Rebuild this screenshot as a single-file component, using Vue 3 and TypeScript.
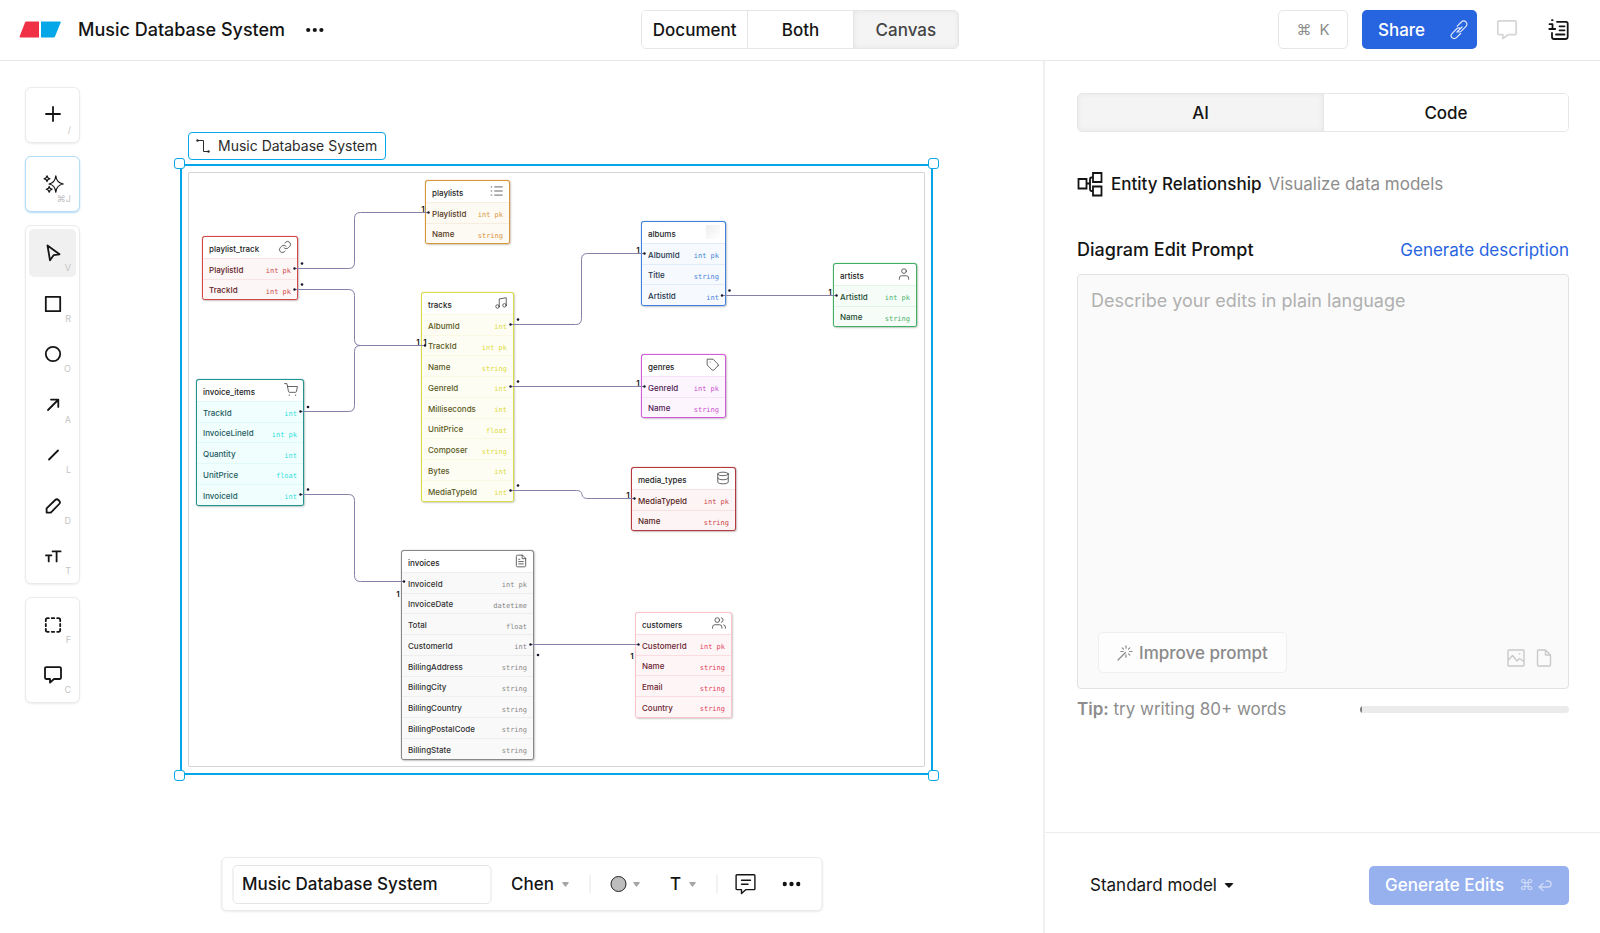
<script setup lang="ts">
import { ref } from 'vue'

interface Field { name: string; type: string }
interface Entity {
  name: string
  x: number
  y: number
  width: number
  tone: string
  icon: string
  fields: Field[]
}
interface Tool { label: string; key: string; icon: string; thin?: boolean }

const ROW = 20.75

const parse = (source: string): Field[] =>
  source.split(',').map((part) => {
    const [name, ...type] = part.trim().split(' ')
    return { name, type: type.join(' ') }
  })

const entities: Entity[] = [
  {
    name: 'playlists', x: 237, y: 8, width: 85, tone: 'amber',
    icon: 'M8 5h13M8 12h13M8 19h13M2 5h1M2 12h1M2 19h1',
    fields: parse('PlaylistId int pk, Name string'),
  },
  {
    name: 'playlist_track', x: 14, y: 64, width: 96, tone: 'red',
    icon: 'M10 13a5 5 0 0 0 7.5.5l3-3a5 5 0 0 0-7-7l-1.8 1.7M14 11a5 5 0 0 0-7.5-.5l-3 3a5 5 0 0 0 7 7l1.8-1.7',
    fields: parse('PlaylistId int pk, TrackId int pk'),
  },
  {
    name: 'invoice_items', x: 8, y: 207, width: 108, tone: 'teal',
    icon: 'M1 1h4l2.7 13.4a2 2 0 0 0 2 1.6h9.7a2 2 0 0 0 2-1.6L23 6H6M9 20.5v1M20 20.5v1',
    fields: parse('TrackId int, InvoiceLineId int pk, Quantity int, UnitPrice float, InvoiceId int'),
  },
  {
    name: 'tracks', x: 233, y: 120, width: 93, tone: 'yellow',
    icon: 'M9 18V5l12-2v13M9 18a3 3 0 1 1-6 0 3 3 0 0 1 6 0zM21 16a3 3 0 1 1-6 0 3 3 0 0 1 6 0z',
    fields: parse('AlbumId int, TrackId int pk, Name string, GenreId int, Milliseconds int, UnitPrice float, Composer string, Bytes int, MediaTypeId int'),
  },
  {
    name: 'albums', x: 453, y: 49, width: 85, tone: 'blue', icon: '',
    fields: parse('AlbumId int pk, Title string, ArtistId int'),
  },
  {
    name: 'artists', x: 645, y: 91, width: 84, tone: 'green',
    icon: 'M20 21v-2a4 4 0 0 0-4-4H8a4 4 0 0 0-4 4v2M16 7a4 4 0 1 1-8 0 4 4 0 0 1 8 0z',
    fields: parse('ArtistId int pk, Name string'),
  },
  {
    name: 'genres', x: 453, y: 182, width: 85, tone: 'magenta',
    icon: 'M20.6 13.4l-7.2 7.2a2 2 0 0 1-2.8 0L2 12V2h10l8.6 8.6a2 2 0 0 1 0 2.8zM7 7h.1',
    fields: parse('GenreId int pk, Name string'),
  },
  {
    name: 'media_types', x: 443, y: 295, width: 105, tone: 'crimson',
    icon: 'M21 5c0 1.7-4 3-9 3s-9-1.3-9-3 4-3 9-3 9 1.3 9 3zM21 12c0 1.7-4 3-9 3s-9-1.3-9-3M3 5v14c0 1.7 4 3 9 3s9-1.3 9-3V5',
    fields: parse('MediaTypeId int pk, Name string'),
  },
  {
    name: 'invoices', x: 213, y: 378, width: 133, tone: 'gray',
    icon: 'M14 2H6a2 2 0 0 0-2 2v16a2 2 0 0 0 2 2h12a2 2 0 0 0 2-2V8zM14 2v6h6M16 13H8M16 17H8M10 9H8',
    fields: parse('InvoiceId int pk, InvoiceDate datetime, Total float, CustomerId int, BillingAddress string, BillingCity string, BillingCountry string, BillingPostalCode string, BillingState string'),
  },
  {
    name: 'customers', x: 447, y: 440, width: 97, tone: 'rose',
    icon: 'M17 21v-2a4 4 0 0 0-4-4H5a4 4 0 0 0-4 4v2M13 7a4 4 0 1 1-8 0 4 4 0 0 1 8 0zM23 21v-2a4 4 0 0 0-3-3.9M16 3.1a4 4 0 0 1 0 7.8',
    fields: parse('CustomerId int pk, Name string, Email string, Country string'),
  },
]

const edges: string[] = [
  'M106.5 96.5H160.5Q166.5 96.5 166.5 90.5V46.5Q166.5 40.5 172.5 40.5H240.5',
  'M106.5 117.5H160.5Q166.5 117.5 166.5 123.5V167.5Q166.5 173.5 172.5 173.5H237',
  'M112.5 239.5H160.5Q166.5 239.5 166.5 233.5V179.5Q166.5 173.5 172.5 173.5H237',
  'M112.5 322.5H160.5Q166.5 322.5 166.5 328.5V403.5Q166.5 409.5 172.5 409.5H216',
  'M322.5 152.5H387.5Q393.5 152.5 393.5 146.5V87.5Q393.5 81.5 399.5 81.5H456.5',
  'M322.5 214.5H456.5',
  'M322.5 318.5H388.5Q393.5 318.5 394 322.5Q394.5 326.5 399.5 326.5H446.5',
  'M534 123.5H648.5',
  'M342.5 472.5H450.5',
]

const anchors: number[][] = [
  [106.5, 96.5], [240.5, 40.5], [106.5, 117.5], [237, 173.5], [112.5, 239.5], [112.5, 322.5],
  [216, 409.5], [322.5, 152.5], [456.5, 81.5], [322.5, 214.5], [456.5, 214.5], [322.5, 318.5],
  [446.5, 326.5], [534, 123.5], [648.5, 123.5], [342.5, 472.5], [450.5, 472.5],
]

const many: number[][] = [
  [114, 91.5], [114, 112.5], [120, 235], [120, 317.5], [330, 147.5],
  [330, 209.5], [330, 313.5], [541.5, 118.5], [350, 483],
]

const ones: number[][] = [
  [235, 40], [230, 173], [237, 173], [210, 425], [450, 81],
  [450, 214], [440, 326], [642, 123], [444, 487],
]

const commentIcon = 'M5.2 4.2h13.6q1.2 0 1.2 1.2v9.4q0 1.2-1.2 1.2H13l-4 3.6V16H5.2Q4 16 4 14.8V5.4q0-1.2 1.2-1.2z'

const toolGroups: Tool[][] = [
  [{ label: 'Insert', key: '/', icon: 'M12 4v14M5 11h14' }],
  [{
    label: 'AI', key: '⌘J', thin: true,
    icon: 'M14.8 3.8C15.3 8.6 17.2 11.3 22.3 12 17.2 12.7 15.3 15.4 14.8 20.2 14.3 15.4 12.4 12.7 8 12 12.4 11.3 14.3 8.6 14.8 3.8zM6 3.8l.9 2 2 .9-2 .9-.9 2-.9-2-2-.9 2-.9zM8.2 14.4l.9 2 2 .9-2 .9-.9 2-.9-2-2-.9 2-.9z',
  }],
  [
    { label: 'Select', key: 'V', icon: 'M6.5 4.5L18.5 13.3 12.6 14.2 9 19.3z' },
    { label: 'Rectangle', key: 'R', icon: 'M4.8 4.8h14.4v14.4H4.8z' },
    { label: 'Ellipse', key: 'O', icon: 'M19.2 12a7.2 7.2 0 1 1-14.4 0 7.2 7.2 0 0 1 14.4 0z' },
    { label: 'Arrow', key: 'A', icon: 'M7 17L17 7M10 6.6h7.3v7.3' },
    { label: 'Line', key: 'L', icon: 'M8 16.5l9-9' },
    { label: 'Draw', key: 'D', icon: 'M5.6 18.6v-4.2l8.6-8.4q1.6-1.5 3.2 0l.8.8q1.5 1.6 0 3.2l-8.4 8.6z' },
    { label: 'Text', key: 'T', icon: 'M5 11.4h5.4M7.7 11.4v6M11.6 7.4h8M15.6 7.4v10' },
  ],
  [
    {
      label: 'Frame', key: 'F',
      icon: 'M4.8 8.2V7q0-1.8 1.8-1.8h1.2M10.8 5.2h2.4M16.2 5.2h1.2q1.8 0 1.8 1.8v1.2M19.2 11v2.2M19.2 15.8V17q0 1.8-1.8 1.8h-1.2M13.2 18.8h-2.4M7.8 18.8H6.6Q4.8 18.8 4.8 17v-1.2M4.8 13.2V11',
    },
    { label: 'Comment', key: 'C', icon: commentIcon },
  ],
]

const views = ['Document', 'Both', 'Canvas']
const view = ref('Canvas')
const panels = ['AI', 'Code']
const panel = ref('AI')
const activeTool = ref('V')
const title = ref('Music Database System')
const prompt = ref('')
const notation = ref('Chen')
const model = ref('Standard model')
const progress = ref(1)

const place = (e: Entity) => ({
  left: `${e.x}px`,
  top: `${e.y}px`,
  width: `${e.width}px`,
  height: `${(e.fields.length + 1) * ROW + 2}px`,
})
</script>

<template>
  <div class="app">
    <header class="topbar">
      <div class="brand">
        <svg class="logo" viewBox="0 0 42 17" aria-hidden="true">
          <path d="M7.500 .5H20V16.500H1.500Q.2 16.500 .7 15.200L6 1.500Q6.500 .5 7.500 .5z" fill="#f03044" />
          <path d="M22 .5H41Q42.200 .5 41.600 1.800L36 15.500Q35.500 16.500 34.500 16.500H22z" fill="#06a7e8" />
        </svg>
        <h1>{{ title }}</h1>
        <button class="plain" type="button" aria-label="File menu">
          <svg class="dots" viewBox="0 0 18 6"><circle cx="2.200" cy="3" r="2.100" /><circle cx="8.800" cy="3" r="2.100" /><circle cx="15.400" cy="3" r="2.100" /></svg>
        </button>
      </div>
      <div class="segmented views">
        <button v-for="v in views" :key="v" type="button" :class="{ on: view === v }" :aria-pressed="view === v" @click="view = v">{{ v }}</button>
      </div>
      <div class="actions">
        <button class="keys" type="button"><span>⌘</span><span>K</span></button>
        <button class="share" type="button">
          Share
          <svg viewBox="0 0 20 20" class="i20"><path d="M8.200 6.200l4.200-4.200a2.900 2.900 0 0 1 4.600 0 3 3 0 0 1 0 4.300l-4.700 4.800a3 3 0 0 1-3.600.4M11.400 8.400a3 3 0 0 0-3.700.4L3 13.600a3 3 0 0 0 0 4.100 3 3 0 0 0 4.400 0l4.200-4.200M8 12l5-5" /></svg>
        </button>
        <button class="plain faint" type="button" aria-label="Comments">
          <svg class="i24 heavy" viewBox="0 0 24 24"><path d="M4 2.800h16q1.200 0 1.200 1.200v11.500q0 1.200-1.200 1.200h-6.800L7.800 20.500v-3.800H4q-1.200 0-1.200-1.200V4q0-1.200 1.200-1.200z" /></svg>
        </button>
        <button class="plain" type="button" aria-label="Outline">
          <svg class="i24 heavy" viewBox="0 0 24 24"><path d="M10 3.800h9q1.700 0 1.700 1.700v13q0 2.500-2.200 2.500H7q-2 0-2-2v-4M12.500 8.300h5M12.500 12.300h5M9 16.500h8.500M2.500 6.200h3v4.300M2.300 11h5.900M5 2.200h.6" /></svg>
        </button>
      </div>
    </header>

    <div class="body">
      <main class="canvas">
        <nav class="tools" aria-label="Tools">
          <div v-for="(group, i) in toolGroups" :key="i" class="tool-group" :class="{ ai: i === 1, long: i === 2 }">
            <button v-for="t in group" :key="t.key" type="button" :aria-label="t.label" :class="{ on: activeTool === t.key }" @click="activeTool = t.key">
              <svg class="i24" viewBox="0 0 24 24" :class="{ thin: t.thin }"><path :d="t.icon" /></svg>
              <kbd>{{ t.key }}</kbd>
            </button>
          </div>
        </nav>

        <div class="board">
          <div class="chip">
            <svg viewBox="0 0 14 14" class="i14"><path d="M1.500 1.500H7.500V12.500H12.500" /><circle cx="1.500" cy="1.500" r="1.200" /><circle cx="12.500" cy="12.500" r="1.200" /></svg>
            {{ title }}
          </div>
          <div class="selection"><i class="nw" /><i class="ne" /><i class="sw" /><i class="se" /></div>
          <section v-for="e in entities" :key="e.name" class="entity" :class="e.tone" :style="place(e)">
            <header>
              <span>{{ e.name }}</span>
              <svg v-if="e.icon" viewBox="0 0 24 24"><path :d="e.icon" /></svg>
              <i v-else class="blank" />
            </header>
            <div v-for="f in e.fields" :key="f.name" class="field">
              <span>{{ f.name }}</span>
              <code>{{ f.type }}</code>
            </div>
          </section>
          <svg class="links" viewBox="0 0 738 596">
            <path v-for="d in edges" :key="d" :d="d" />
            <circle v-for="(p, i) in anchors" :key="'a' + i" :cx="p[0]" :cy="p[1]" r="1.200" />
            <circle v-for="(p, i) in many" :key="'m' + i" :cx="p[0]" :cy="p[1]" r="1.300" />
            <text v-for="(p, i) in ones" :key="'o' + i" :x="p[0]" :y="p[1]" text-anchor="middle">1</text>
          </svg>
        </div>

        <div class="dock">
          <input v-model="title" type="text" aria-label="Diagram title" />
          <label class="pick notation">
            <select v-model="notation" aria-label="Notation"><option>Chen</option></select>
            <i class="caret" />
          </label>
          <i class="rule" />
          <button class="plain fill" type="button" aria-label="Colour"><i class="swatch" /><i class="caret" /></button>
          <button class="plain letter" type="button" aria-label="Typeface"><span>T</span><i class="caret" /></button>
          <i class="rule" />
          <button class="plain note" type="button" aria-label="Add note">
            <svg class="i24" viewBox="0 0 24 24"><path d="M3.500 2.800h17q.9 0 .9.900v13q0 .9-.9.900h-8l-4.500 4v-4H3.500q-.9 0-.9-.9v-13q0-.9.9-.9zM8 8.300h9M8 12.300h6.500" /></svg>
          </button>
          <button class="plain more" type="button" aria-label="More">
            <svg class="dots" viewBox="0 0 18 6"><circle cx="2.200" cy="3" r="2.200" /><circle cx="9" cy="3" r="2.200" /><circle cx="15.800" cy="3" r="2.200" /></svg>
          </button>
        </div>
      </main>

      <aside class="side">
        <div class="side-body">
          <div class="segmented panels">
            <button v-for="p in panels" :key="p" type="button" :class="{ on: panel === p }" :aria-pressed="panel === p" @click="panel = p">{{ p }}</button>
          </div>
          <div class="kind">
            <svg viewBox="0 0 26 26"><path d="M1.500 8h8v9.500h-8zM16 2h8.500v9H16zM16 15.500h8.500v9H16zM9.500 12.500H13M16 6.500h-1.500q-1.500 0-1.500 1.500v10.500q0 1.500 1.500 1.500H16" /></svg>
            <strong>Entity Relationship</strong>
            <span>Visualize data models</span>
          </div>
          <div class="prompt-head">
            <label for="prompt">Diagram Edit Prompt</label>
            <a href="#">Generate description</a>
          </div>
          <div class="prompt-box">
            <textarea id="prompt" v-model="prompt" placeholder="Describe your edits in plain language" />
            <div class="prompt-tools">
              <button class="improve" type="button">
                <svg viewBox="0 0 16 16" class="i16"><path d="M1 15l7.500-7.500M9 .8v2.400M9 9.800v2.400M3.800 6.500h2.400M12.500 6.500h2.600M5.200 2.800l1.300 1.300M12.800 2.800l-1.300 1.300M12.800 10.200l-1.300-1.300" /></svg>
                Improve prompt
              </button>
              <div class="attach">
                <button class="plain" type="button" aria-label="Attach image">
                  <svg viewBox="0 0 18 18" class="i18"><path d="M2 1h14q1 0 1 1v14q0 1-1 1H2q-1 0-1-1V2q0-1 1-1zM1 11.500l4.500-5 4.500 5.500 2.500-2.500 4.500 3M12.500 4.800h.2" /></svg>
                </button>
                <button class="plain" type="button" aria-label="Attach file">
                  <svg viewBox="0 0 18 18" class="i18"><path d="M3.500 1h7l5 5v10q0 1-1 1h-11q-1 0-1-1V2q0-1 1-1zM10.500 1v5h5" /></svg>
                </button>
              </div>
            </div>
          </div>
          <div class="tip">
            <p><b>Tip:</b> try writing 80+ words</p>
            <div class="meter"><i :style="{ width: progress + '%' }" /></div>
          </div>
        </div>
        <footer class="side-foot">
          <label class="pick model">
            <select v-model="model" aria-label="Model"><option>Standard model</option></select>
            <i class="caret" />
          </label>
          <button class="generate" type="button">
            Generate Edits
            <span>⌘</span>
            <svg viewBox="0 0 14 12" class="i14"><path d="M5 4.500L1 8l4 3.500M1 8h9.500a2.500 2.500 0 0 0 2.500-2.500v-.5a3 3 0 0 0-3-3H8.500" /></svg>
          </button>
        </footer>
      </aside>
    </div>
  </div>
</template>

<style>
html, body { margin: 0; background: #fff; }
</style>

<style scoped>
* { box-sizing: border-box; }
.app {
  display: flex;
  flex-direction: column;
  min-height: 100vh;
  color: #141414;
  font: 500 17px/24px Inter, "Liberation Sans", sans-serif;
}
button, input, select, textarea { font: inherit; color: inherit; margin: 0; }
button { cursor: pointer; }
svg { display: block; flex: none; fill: none; stroke: currentColor; stroke-width: 1.4; stroke-linecap: round; stroke-linejoin: round; }
.i14 { width: 14px; height: 14px; }
.i16 { width: 16px; height: 16px; }
.i18 { width: 18px; height: 18px; }
.i20 { width: 20px; height: 20px; }
.i24 { width: 24px; height: 24px; }
.dots { width: 18px; height: 6px; fill: currentColor; stroke: none; }
.plain { display: flex; align-items: center; padding: 0; border: 0; background: none; }
.faint { color: #d6d6d6; }
.heavy { stroke-width: 1.8; }

.topbar {
  display: grid;
  grid-template-columns: 1fr auto 1fr;
  align-items: center;
  height: 61px;
  padding: 0 19px 1px;
  border-bottom: 1px solid #e9e9e9;
}
.brand { display: flex; align-items: center; }
.logo { width: 42px; height: 17px; stroke: none; }
h1 { margin: 0 21px 0 17px; font-size: 18px; font-weight: 500; line-height: 24px; }
.segmented { display: grid; grid-auto-flow: column; grid-auto-columns: 1fr; border: 1px solid #e6e6e6; border-radius: 5px; overflow: hidden; }
.segmented button { padding: 0; border: 0; background: #fff; }
.segmented button + button { border-left: 1px solid #e6e6e6; }
.segmented .on { background: #f4f4f4; box-shadow: inset 0 0 5px #e4e4e4; }
.views { width: 318px; height: 39px; }
.views .on { color: #444; }
.actions { display: flex; align-items: center; justify-content: flex-end; padding-right: 10px; }
.keys { display: flex; align-items: center; justify-content: center; gap: 8px; width: 70px; height: 39px; margin-right: 14px; border: 1px solid #e6e6e6; border-radius: 5px; background: #fff; color: #8d8d8d; font-size: 15px; font-weight: 400; }
.share { display: flex; align-items: center; justify-content: space-between; width: 115px; height: 39px; margin-right: 18px; padding: 0 8px 0 16px; border: 0; border-radius: 5px; background: #2764e0; color: #fff; }
.share svg { stroke-width: 1.2; opacity: 0.85; }
.actions .plain + .plain { margin-left: 28px; }

.body { display: flex; flex: 1; }
.canvas { position: relative; flex: 1; min-width: 0; }

.tools { display: flex; flex-direction: column; gap: 13px; width: 55px; margin: 26px 0 0 25px; }
.tool-group { display: flex; flex-direction: column; justify-content: space-between; gap: 2px; padding: 3px; border: 1px solid #ebebeb; border-radius: 6px; background: #fff; box-shadow: 0 1px 2px #ededed; }
.tool-group.long { height: 359px; }
.tool-group.ai { border-color: #b5dcf4; box-shadow: 0 1px 2px #b5dcf4; }
.tool-group button { position: relative; display: grid; place-items: center; height: 48px; padding: 0; border: 0; border-radius: 5px; background: none; }
.tool-group .on { background: #f0f0f0; }
.tool-group svg { stroke-width: 1.8; }
.tool-group svg.thin { stroke-width: 1.2; }
kbd { position: absolute; right: 5px; bottom: 3px; color: #c4c4c4; font: 400 9px/12px Inter, sans-serif; }

.board { position: absolute; left: 188px; top: 111px; width: 737px; height: 595px; border-radius: 2px; box-shadow: inset 0 0 0 1px #d3d3d8; }
.chip { position: absolute; left: 0; top: -40px; display: flex; align-items: center; gap: 8px; height: 28px; padding: 0 8px 0 7px; border: 1px solid #06a7e8; border-radius: 4px; background: #fff; color: #2b2b2b; font-size: 14px; font-weight: 400; white-space: nowrap; }
.chip svg { stroke-width: 1; }
.chip circle { fill: currentColor; stroke: none; }
.selection { position: absolute; inset: -8px; border: 2px solid #06a7e8; }
.selection i { position: absolute; width: 11px; height: 11px; border: 1px solid #06a7e8; border-radius: 3px; background: #fff; }
.nw { left: -8px; top: -8px; }
.ne { right: -8px; top: -8px; }
.sw { left: -8px; bottom: -8px; }
.se { right: -8px; bottom: -8px; }

.entity { --line: #888; --fill: #f9f9f9; --name: #333; --type: #888; --split: #eee; position: absolute; display: grid; grid-auto-rows: 1fr; border: 1px solid var(--line); border-radius: 3px; background: #fff; box-shadow: 0 0 1px var(--line), 1px 1px 2px #ccc; overflow: hidden; font: 500 8px/12px Inter, sans-serif; }
.entity header, .field { display: flex; justify-content: space-between; align-items: center; min-height: 0; padding: 2px 6px 0; white-space: nowrap; }
.entity header { padding: 4px 5px 0 6px; color: #222; }
.entity header svg { width: 14px; height: 14px; margin-bottom: 5px; color: #444; }
.blank { width: 14px; height: 14px; margin-bottom: 4px; background: linear-gradient(135deg, #eee, #fff); }
.field { border-top: 1px solid var(--split); background: var(--fill); color: var(--name); }
code { padding-top: 3px; color: var(--type); font: 400 7px/12px "DejaVu Sans Mono", monospace; white-space: pre; }
.amber { --line: #d8963c; --fill: #fdf9f3; --name: #56391c; --type: #d9963f; --split: #f8eee0; }
.red { --line: #d04a4c; --fill: #fdf6f6; --name: #5f2227; --type: #cf4a4d; --split: #f8e4e4; }
.crimson { --line: #b5393c; --fill: #fdf5f5; --name: #571d22; --type: #cb4347; --split: #f8e0e1; }
.teal { --line: #229390; --fill: #f1fefe; --name: #1e5c60; --type: #2fdede; --split: #e0fafa; }
.yellow { --line: #dadb4b; --fill: #fefdf3; --name: #5a5a1e; --type: #dbdb40; --split: #f9f8e0; }
.blue { --line: #4180dd; --fill: #f6f9fd; --name: #26374f; --type: #4684db; --split: #e2ebf8; }
.green { --line: #42ae63; --fill: #f6fdf8; --name: #244c33; --type: #4bb16b; --split: #e1f5e7; }
.magenta { --line: #d05bd5; --fill: #fcf5fd; --name: #512254; --type: #ca51cf; --split: #f7e3f8; }
.rose { --line: #f9c6ce; --fill: #fef5f6; --name: #6b2532; --type: #e33f5c; --split: #fadde1; }
.links { position: absolute; left: 0; top: 0; width: 738px; height: 596px; stroke-width: 1; color: #8480a8; pointer-events: none; }
.links circle { fill: #15152a; stroke: none; }
.links text { fill: #111; stroke: none; font: 600 8px Inter, sans-serif; }

.dock { position: absolute; left: 50%; bottom: 22px; display: flex; align-items: center; width: 601px; height: 54px; padding: 0 10px; transform: translateX(-50%); border: 1px solid #ebebeb; border-radius: 5px; background: #fff; box-shadow: 0 1px 2px #ededed; }
.dock input { width: 259px; height: 39px; padding: 0 9px; border: 1px solid #e4e4e4; border-radius: 5px; background: #fff; outline: 0; }
.pick { display: flex; align-items: center; gap: 7px; }
.notation { margin-left: 20px; }
select { padding: 0; border: 0; outline: 0; background: none; appearance: none; }
.caret { border: 4px solid transparent; border-top: 5px solid #a6a6a6; border-bottom: 0; border-radius: 2px; }
.rule { width: 1px; height: 18px; margin: 0 20px; background: #e6e6e6; }
.swatch { width: 16px; height: 16px; margin-right: 6px; border: 1px solid #222; border-radius: 50%; background: #bdbdbd; }
.letter { gap: 7px; margin-left: 30px; }
.note { margin-left: -4px; }
.more { margin-left: 25px; }

.side { display: flex; flex-direction: column; width: 557px; border-left: 2px solid #f0f0f0; }
.side-body { display: flex; flex: 1; flex-direction: column; padding: 32px 31px 111px 32px; }
.panels { height: 39px; }
.kind { display: flex; align-items: center; height: 28px; margin-top: 38px; white-space: nowrap; }
.kind svg { width: 26px; height: 26px; stroke-width: 1.8; stroke-linejoin: miter; }
.kind strong { margin: 0 7px 0 8px; font-weight: 500; }
.kind span { color: #8d8d8d; font-weight: 400; }
.prompt-head { display: flex; justify-content: space-between; margin-top: 40px; }
.prompt-head label { font-size: 18px; }
a { color: #2764e0; font-weight: 400; text-decoration: none; }
.prompt-box { display: flex; flex: 1; flex-direction: column; margin-top: 12px; border: 1px solid #e2e2e2; border-radius: 4px; background: #fafafa; }
textarea { flex: 1; padding: 14px 13px; border: 0; outline: 0; background: none; resize: none; font-size: 18px; font-weight: 400; }
textarea::placeholder { color: #b0b0b0; opacity: 1; }
.prompt-tools { display: flex; align-items: flex-end; justify-content: space-between; padding: 0 15px 15px 20px; }
.improve { display: flex; align-items: center; justify-content: center; gap: 6px; width: 189px; height: 41px; padding: 0; border: 1px solid #efefef; border-radius: 5px; background: #fdfdfd; color: #8a8a8a; }
.improve svg { stroke-width: 1.2; }
.attach { display: flex; gap: 10px; margin-bottom: 6px; color: #c9c9c9; }
.tip { display: flex; align-items: center; justify-content: space-between; height: 24px; margin-top: 8px; color: #8d8d8d; font-weight: 400; }
.tip p { margin: 0; }
.tip b { font-weight: 600; }
.meter { width: 209px; height: 7px; border-radius: 4px; background: #ebebeb; overflow: hidden; }
.meter i { display: block; height: 100%; background: #7d7d7d; }
.side-foot { display: flex; align-items: center; justify-content: space-between; height: 101px; padding: 4px 31px 0 45px; border-top: 1px solid #ededed; }
.model { font-weight: 400; }
.model .caret { border-width: 5px 5px 0; border-top-color: #141414; }
.generate { display: flex; align-items: center; width: 200px; height: 39px; padding: 0 17px 0 16px; border: 0; border-radius: 5px; background: #97b1ef; color: #fff; white-space: nowrap; }
.generate span { margin: 0 4px 0 auto; color: #cfdaf6; font-size: 15px; font-weight: 400; }
.generate svg { color: #cfdaf6; }
</style>
